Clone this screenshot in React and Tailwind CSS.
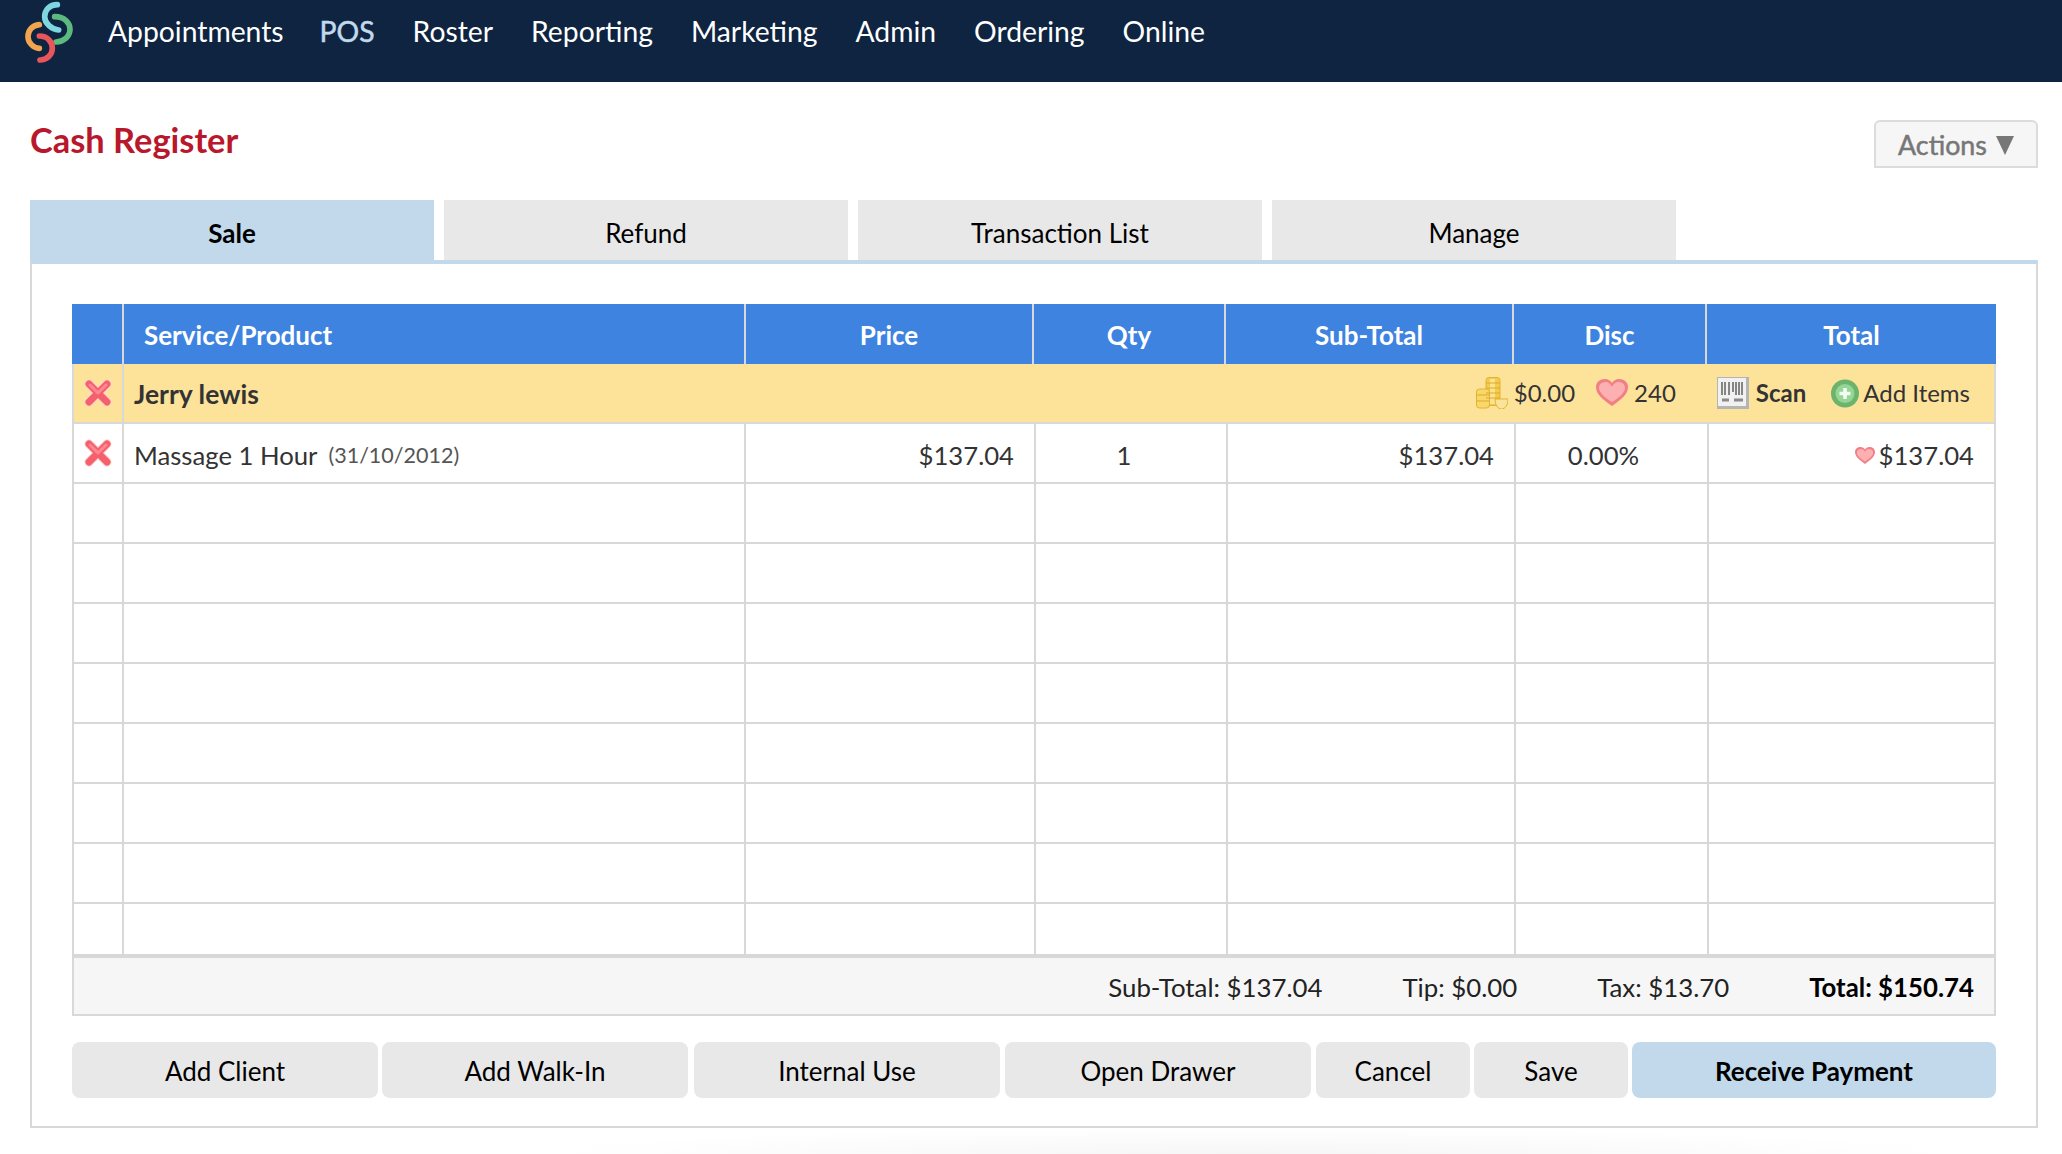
import { useState } from 'react';

const headers = ['', 'Service/Product', 'Price', 'Qty', 'Sub-Total', 'Disc', 'Total'];
const emptyRows = [1, 2, 3, 4, 5, 6, 7, 8];
const tabs = ['Sale', 'Refund', 'Transaction List', 'Manage'];
const navItems = ['Appointments', 'POS', 'Roster', 'Reporting', 'Marketing', 'Admin', 'Ordering', 'Online'];

function Logo() {
  return (
    <svg width="80" height="70" viewBox="0 0 240 210" fill="none" strokeWidth="17" strokeLinecap="round">
      <path d="M142 14 C118 14 104 30 104 50 C104 70 125 88 146 90" stroke="#7dd6e0" />
      <path d="M134 50 C165 50 180 70 180 88 C180 110 160 126 138 126" stroke="#5dba7e" />
      <path d="M88 74 C66 76 54 92 54 110 C54 128 70 144 88 145" stroke="#f2a54e" />
      <path d="M88 108 C112 108 127 125 127 145 C127 165 110 180 90 180" stroke="#e8555a" />
    </svg>
  );
}

function RedX() {
  return (
    <svg width="28" height="28" viewBox="0 0 28 28" fill="none" strokeLinecap="round">
      <path d="M5 5 L23 23 M23 5 L5 23" stroke="#fbd4d4" strokeWidth="9" />
      <path d="M5 5 L23 23 M23 5 L5 23" stroke="#f4606c" strokeWidth="7" />
      <path d="M6 6 L14 14 M22 6 L14 14" stroke="#ff8890" strokeWidth="3" />
    </svg>
  );
}

function Heart({ size = 32 }) {
  return (
    <svg width={size} height={size * 0.85} viewBox="0 0 32 27">
      <path d="M16 27 C6 20 0 15 0 8 C0 3 4 0 9 0 C12 0 15 2 16 4 C17 2 20 0 23 0 C28 0 32 3 32 8 C32 15 26 20 16 27 Z" fill="#f27f86" />
      <path d="M16 23 C8 18 3 13 3 9 C3 5 6 3 10 3 C12 3 15 5 16 8 C17 5 20 3 22 3 C26 3 29 5 29 9 C29 13 24 18 16 23 Z" fill="#fdb0b2" />
    </svg>
  );
}

function Coins() {
  return (
    <svg width="32" height="32" viewBox="0 0 32 32">
      <rect x="10" y="0.5" width="14" height="28" rx="3" fill="#f5cb4c" stroke="#e2b237" />
      <rect x="14" y="2" width="5" height="25" fill="#fbe38f" />
      <rect x="0.5" y="12" width="13" height="19" rx="3" fill="#f8d868" stroke="#e2b237" />
      <path d="M10 6 H24 M10 11 H24 M10 16 H24 M10 21 H24 M1 18 H13 M1 24 H13" stroke="#dca92c" />
      <path d="M19 22 H32 C32 28 29 32 25.5 32 C22 32 19 28 19 22 Z" fill="#fbe49a" stroke="#e2b237" />
    </svg>
  );
}

function Barcode() {
  return (
    <svg width="32" height="32" viewBox="0 0 32 32">
      <rect width="32" height="32" fill="#b5b5b5" />
      <rect x="1" y="1" width="28" height="28" fill="#f1f1f1" />
      <path d="M5 5 V18 M8 5 V18 M12 5 V18 M16 5 V15 M19 5 V18 M22 5 V18 M25 5 V18" stroke="#6b6b6b" strokeWidth="1.6" />
      <path d="M5 23 H12 M17 23 H26" stroke="#8a8a8a" strokeWidth="3" />
    </svg>
  );
}

function PlusCircle() {
  return (
    <svg width="28" height="29" viewBox="0 0 28 28">
      <circle cx="14" cy="14" r="14" fill="#6cb36c" />
      <circle cx="14" cy="14" r="9.5" fill="#95d595" />
      <path d="M14 8.5 V19.5 M8.5 14 H19.5" stroke="#f2fff2" strokeWidth="3.6" />
    </svg>
  );
}

function EmptyRow({ last }) {
  return (
    <div className={`grid grid-cols-[50px_622px_290px_192px_288px_193px_1fr] ${last ? 'h-[50px]' : 'h-[60px] border-b-2 border-[#d8d8d8]'}`}>
      <div className="border-r-2 border-[#d8d8d8]" />
      <div className="border-r-2 border-[#d8d8d8]" />
      <div className="border-r-2 border-[#d8d8d8]" />
      <div className="border-r-2 border-[#d8d8d8]" />
      <div className="border-r-2 border-[#d8d8d8]" />
      <div className="border-r-2 border-[#d8d8d8]" />
      <div />
    </div>
  );
}

export default function App() {
  const [activeTab] = useState('Sale');

  return (
    <div className="h-[1154px] overflow-hidden bg-white font-['Lato',sans-serif] text-[26px] text-[#333]">
      <nav className="flex h-[82px] bg-[#0e2440] text-[28.3px] text-white">
        <div className="ml-[10px] w-[98px]">
          <Logo />
        </div>
        <ul className="flex gap-[38px] pt-[12px] leading-[38px]">
          {navItems.map((item) => (
            <li key={item} className={item === 'POS' ? '-ml-[2px] text-[#c2d9ec] [-webkit-text-stroke:0.5px_#c2d9ec]' : ''}>{item}</li>
          ))}
        </ul>
      </nav>

      <main className="pl-[30px] pr-[24px]">
        <div className="flex h-[118px] items-start justify-between">
          <h1 className="mt-[35px] text-[34.4px] leading-[46px] font-bold text-[#b9172b]">Cash Register</h1>
          <button className="mt-[38px] flex h-[48px] w-[164px] items-center justify-center gap-[9px] rounded-t-md border-2 border-[#dcdcdc] bg-[#f6f6f6] pt-[2px] text-[26.8px] text-[#777] [-webkit-text-stroke:0.5px_#777]">
            Actions
            <svg width="18" height="19" viewBox="0 0 18 19"><path d="M0 0 H18 L9 19 Z" fill="#777" /></svg>
          </button>
        </div>

        <div className="flex gap-[10px]">
          {tabs.map((tab) => (
            <div
              key={tab}
              className={`flex h-[60px] w-[404px] items-center justify-center pt-[7px] text-black ${tab === activeTab ? 'bg-[#c2d9ec] font-bold' : 'bg-[#e8e8e8]'}`}
            >
              {tab}
            </div>
          ))}
        </div>

        <section className="h-[868px] border-2 border-t-4 border-[#d8d8d8] border-t-[#c2d9ec] px-[40px] pt-[40px]">
          <div className="grid h-[60px] grid-cols-[52px_622px_288px_192px_288px_193px_1fr] bg-[#3e83e0] font-bold text-white">
            {headers.map((h, i) => (
              <div
                key={i}
                className={`flex items-center pt-[2px] ${i === 1 ? 'pl-[20px]' : 'justify-center'} ${i < 6 ? 'border-r-2 border-[#d8d8d8]' : ''}`}
              >
                {h}
              </div>
            ))}
          </div>

          <div className="border-x-2 border-[#d8d8d8]">
            <div className="flex h-[60px] items-center border-b-2 border-[#d8d8d8] bg-[#fde29a]">
              <div className="flex h-full w-[50px] items-center justify-center border-r-2 border-[#d8d8d8]">
                <RedX />
              </div>
              <div className="pl-[10px] pt-[4px] text-[26.5px] font-bold">Jerry lewis</div>
              <div className="ml-auto flex items-center pr-[24px] text-[24px]">
                <Coins />
                <span className="ml-[6px]">$0.00</span>
                <span className="ml-[21px]"><Heart /></span>
                <span className="ml-[6px]">240</span>
                <span className="ml-[41px]"><Barcode /></span>
                <span className="ml-[7px] font-bold">Scan</span>
                <span className="ml-[25px]"><PlusCircle /></span>
                <span className="ml-[4px]">Add Items</span>
              </div>
            </div>

            <div className="grid h-[60px] grid-cols-[50px_622px_290px_192px_288px_193px_1fr] items-stretch border-b-2 border-[#d8d8d8] text-[25.7px]">
              <div className="flex items-center justify-center border-r-2 border-[#d8d8d8]"><RedX /></div>
              <div className="flex items-center border-r-2 border-[#d8d8d8] pl-[10px] pt-[4px]">
                Massage 1 Hour
                <span className="ml-[11px] text-[21.5px] text-[#555]">(31/10/2012)</span>
              </div>
              <div className="flex items-center justify-end border-r-2 border-[#d8d8d8] pr-[20px] pt-[4px]">$137.04</div>
              <div className="flex items-center justify-center border-r-2 border-[#d8d8d8] pr-[14px] pt-[4px]">1</div>
              <div className="flex items-center justify-end border-r-2 border-[#d8d8d8] pr-[20px] pt-[4px]">$137.04</div>
              <div className="flex items-center justify-center border-r-2 border-[#d8d8d8] pr-[16px] pt-[4px]">0.00%</div>
              <div className="flex items-center justify-end gap-[4px] pr-[20px] pt-[4px]">
                <Heart size={20} />
                $137.04
              </div>
            </div>

            {emptyRows.map((r) => (
              <EmptyRow key={r} last={r === 8} />
            ))}
          </div>

          <div className="flex h-[62px] items-center justify-end gap-[80px] border-x-2 border-t-4 border-b-2 border-[#d8d8d8] bg-[#f6f6f6] pr-[20px] pt-[2px] text-[25.8px] text-[#222]">
            <span>Sub-Total: $137.04</span>
            <span>Tip: $0.00</span>
            <span>Tax: $13.70</span>
            <span className="font-bold text-black">Total: $150.74</span>
          </div>

          <div className="mt-[26px] flex h-[56px] gap-[4px] text-black">
            <button className="w-[306px] rounded-lg bg-[#e8e8e8] pt-[3px]">Add Client</button>
            <button className="w-[306px] rounded-lg bg-[#e8e8e8] pt-[3px]">Add Walk-In</button>
            <button className="ml-[2px] w-[306px] rounded-lg bg-[#e8e8e8] pt-[3px]">Internal Use</button>
            <button className="ml-[1px] w-[306px] rounded-lg bg-[#e8e8e8] pt-[3px]">Open Drawer</button>
            <button className="ml-[1px] w-[154px] rounded-lg bg-[#e8e8e8] pt-[3px]">Cancel</button>
            <button className="w-[154px] rounded-lg bg-[#e8e8e8] pt-[3px]">Save</button>
            <button className="flex-1 rounded-lg bg-[#c2d9ec] pt-[3px] font-bold">Receive Payment</button>
          </div>
        </section>

        <div className="ml-[500px] h-[26px] w-[1440px] bg-[radial-gradient(ellipse_at_50%_100%,#f6f6f6,#ffffff_70%)]" />
      </main>
    </div>
  );
}
